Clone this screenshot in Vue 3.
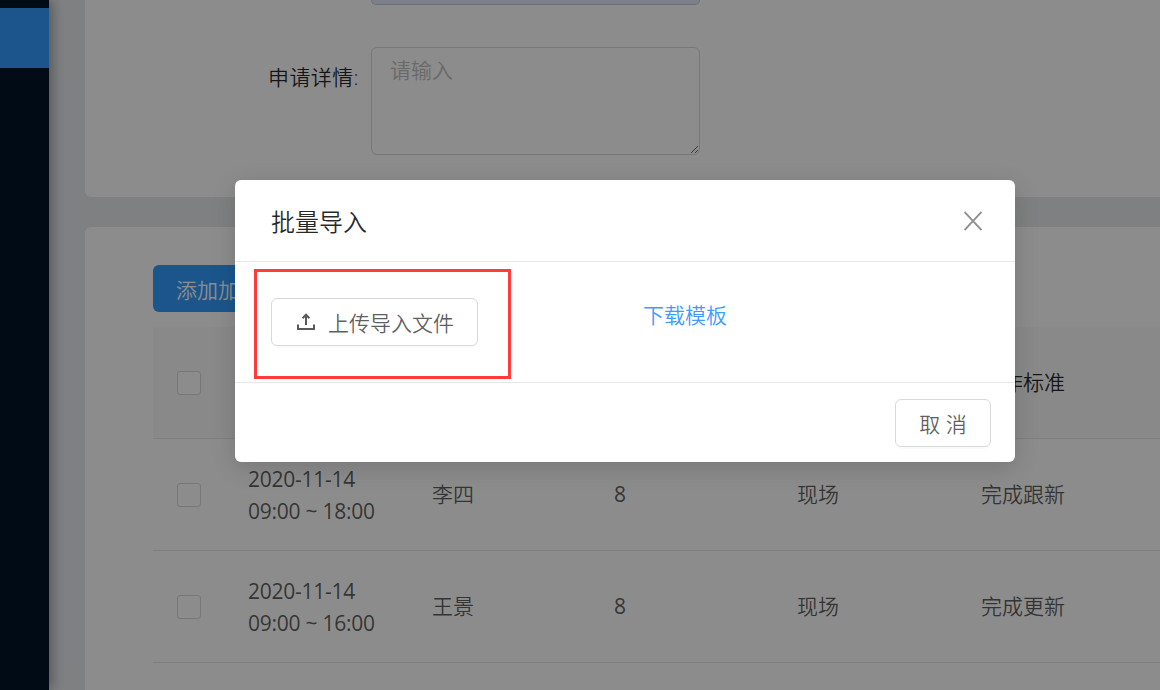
<script setup>
const rows = [
  { date: '2020-11-14', time: '09:00 ~ 18:00', name: '李四', hours: '8', place: '现场', standard: '完成跟新' },
  { date: '2020-11-14', time: '09:00 ~ 16:00', name: '王景', hours: '8', place: '现场', standard: '完成更新' }
]
</script>

<template>
  <div class="page">
    <aside class="sidebar">
      <div class="active-item"></div>
    </aside>
    <main class="main">
      <section class="card form-card">
        <div class="top-input-row"><div class="top-input"></div></div>
        <div class="form-row">
          <label class="label">申请详情:</label>
          <textarea class="textarea" placeholder="请输入"></textarea>
        </div>
      </section>
      <section class="card table-card">
        <button class="add-btn">添加加班</button>
        <div class="table">
          <div class="tr head">
            <div class="cell"><span class="check"></span></div>
            <div class="cell"></div>
            <div class="cell"></div>
            <div class="cell"></div>
            <div class="cell"></div>
            <div class="cell">工作标准</div>
          </div>
          <div v-for="(row, i) in rows" :key="i" class="tr">
            <div class="cell"><span class="check"></span></div>
            <div class="cell stack"><span>{{ row.date }}</span><span>{{ row.time }}</span></div>
            <div class="cell">{{ row.name }}</div>
            <div class="cell num">{{ row.hours }}</div>
            <div class="cell">{{ row.place }}</div>
            <div class="cell">{{ row.standard }}</div>
          </div>
        </div>
      </section>
    </main>

    <div class="mask"></div>

    <div class="modal">
      <header class="modal-head">
        <h2 class="modal-title">批量导入</h2>
        <svg class="close" width="18" height="20" viewBox="0 0 18 20" aria-label="关闭">
          <path d="M0.5 1 L17.5 19 M17.5 1 L0.5 19" fill="none" stroke="#8f8f8f" stroke-width="1.9" />
        </svg>
      </header>
      <div class="modal-body">
        <button class="upload-btn">
          <svg class="upload-icon" width="18" height="18" viewBox="0 0 18 18">
            <path d="M9 2 V12 M5.6 5.2 L9 1.6 L12.4 5.2 M1 11.5 V16 H17 V11.5" fill="none" stroke="#595959" stroke-width="2" />
          </svg>
          <span>上传导入文件</span>
        </button>
        <a class="link">下载模板</a>
        <div class="highlight"></div>
      </div>
      <footer class="modal-foot">
        <button class="cancel-btn">取 消</button>
      </footer>
    </div>
  </div>
</template>

<style>
html, body { margin: 0; padding: 0; overflow: hidden; }
</style>

<style scoped>
.page {
  position: relative;
  display: flex;
  width: 1160px;
  height: 690px;
  overflow: hidden;
  background: #e8eaec;
  font-family: "Open Sans", "Noto Sans CJK SC", sans-serif;
  font-size: 21px;
  font-weight: 350;
  color: rgba(0, 0, 0, 0.65);
}
.sidebar {
  flex: 0 0 49px;
  background: #001529;
  padding-top: 8px;
  box-shadow: 3px 0 12px rgba(0, 0, 0, 0.35);
  position: relative;
  z-index: 1;
}
.active-item { height: 60px; background: #339bff; }
.main {
  flex: 0 0 1250px;
  padding-left: 36px;
  display: flex;
  flex-direction: column;
  gap: 30px;
}
.card { background: #fff; border-radius: 6px; flex: none; }
.form-card { height: 197px; border-radius: 0 0 6px 6px; box-sizing: border-box; }
.top-input-row { padding-left: 286px; height: 47px; box-sizing: border-box; }
.top-input {
  width: 329px;
  height: 5px;
  box-sizing: border-box;
  background: #e2eaf8;
  border: 1px solid #c4cfe6;
  border-top: 0;
  border-radius: 0 0 6px 6px;
}
.form-row { display: flex; }
.label {
  width: 286px;
  box-sizing: border-box;
  padding: 14px 12px 0 0;
  text-align: right;
  line-height: 32px;
  letter-spacing: 0.4px;
  color: rgba(0, 0, 0, 0.85);
}
.textarea {
  width: 329px;
  height: 108px;
  box-sizing: border-box;
  margin: 0;
  padding: 6px 18px;
  border: 1px solid #d9d9d9;
  border-radius: 6px;
  background: #fff;
  font: inherit;
  line-height: 32px;
  outline: none;
}
.textarea::placeholder { color: #bfbfbf; }
.table-card { padding: 38px 0 0 68px; height: 600px; box-sizing: border-box; }
.add-btn {
  display: block;
  width: 190px;
  height: 47px;
  padding: 0 23px;
  border: 0;
  border-radius: 6px;
  background: #339bff;
  color: #fff;
  font: inherit;
  text-align: left;
}
.table { margin-top: 15px; }
.tr {
  display: grid;
  grid-template-columns: 95px 184px 182px 183px 184px 200px;
  height: 112px;
  box-sizing: border-box;
  border-bottom: 1px solid #e8e8e8;
}
.head { background: #fafafa; color: rgba(0, 0, 0, 0.85); }
.cell {
  display: flex;
  align-items: center;
  line-height: 32px;
  padding-bottom: 2px;
}
.num { font-weight: 400; }
.stack {
  flex-direction: column;
  align-items: flex-start;
  justify-content: center;
  padding-bottom: 0;
  font-weight: 400;
  letter-spacing: -0.25px;
}
.check {
  display: block;
  width: 24px;
  height: 24px;
  margin: 2px 0 0 24px;
  box-sizing: border-box;
  border: 1px solid #d9d9d9;
  border-radius: 3px;
  background: #fff;
}
.mask {
  position: absolute;
  inset: 0;
  z-index: 2;
  background: rgba(0, 0, 0, 0.45);
}
.modal {
  position: absolute;
  z-index: 3;
  left: 235px;
  top: 180px;
  width: 780px;
  height: 282px;
  display: flex;
  flex-direction: column;
  background: #fff;
  border-radius: 6px;
  box-shadow: 0 6px 24px rgba(0, 0, 0, 0.15);
}
.modal-head {
  height: 82px;
  box-sizing: border-box;
  padding: 0 33px 0 36px;
  display: flex;
  align-items: center;
  justify-content: space-between;
  border-bottom: 1px solid #e8e8e8;
}
.modal-title {
  margin: 0;
  font-size: 24px;
  font-weight: 350;
  color: rgba(0, 0, 0, 0.85);
}
.close { display: block; }
.modal-body {
  position: relative;
  height: 120px;
  box-sizing: border-box;
  padding: 36px;
  display: flex;
  align-items: flex-start;
}
.upload-btn {
  width: 207px;
  height: 48px;
  box-sizing: border-box;
  display: flex;
  align-items: center;
  gap: 13px;
  padding: 0 0 0 25px;
  background: #fff;
  border: 1px solid #d9d9d9;
  border-radius: 6px;
  box-shadow: 0 2px 0 rgba(0, 0, 0, 0.015);
  font: inherit;
  color: rgba(0, 0, 0, 0.65);
}
.upload-icon { flex: none; }
.link {
  margin-left: 165px;
  line-height: 34px;
  color: #3f9bff;
}
.highlight {
  position: absolute;
  left: 19px;
  top: 7px;
  width: 257px;
  height: 110px;
  box-sizing: border-box;
  border: 3px solid #ff3b3b;
}
.modal-foot {
  flex: 1;
  box-sizing: border-box;
  border-top: 1px solid #e8e8e8;
  padding: 16px 24px 0;
  display: flex;
  justify-content: flex-end;
  align-items: flex-start;
}
.cancel-btn {
  width: 96px;
  height: 48px;
  background: #fff;
  border: 1px solid #d9d9d9;
  border-radius: 6px;
  box-shadow: 0 2px 0 rgba(0, 0, 0, 0.015);
  font: inherit;
  color: rgba(0, 0, 0, 0.65);
}
</style>
